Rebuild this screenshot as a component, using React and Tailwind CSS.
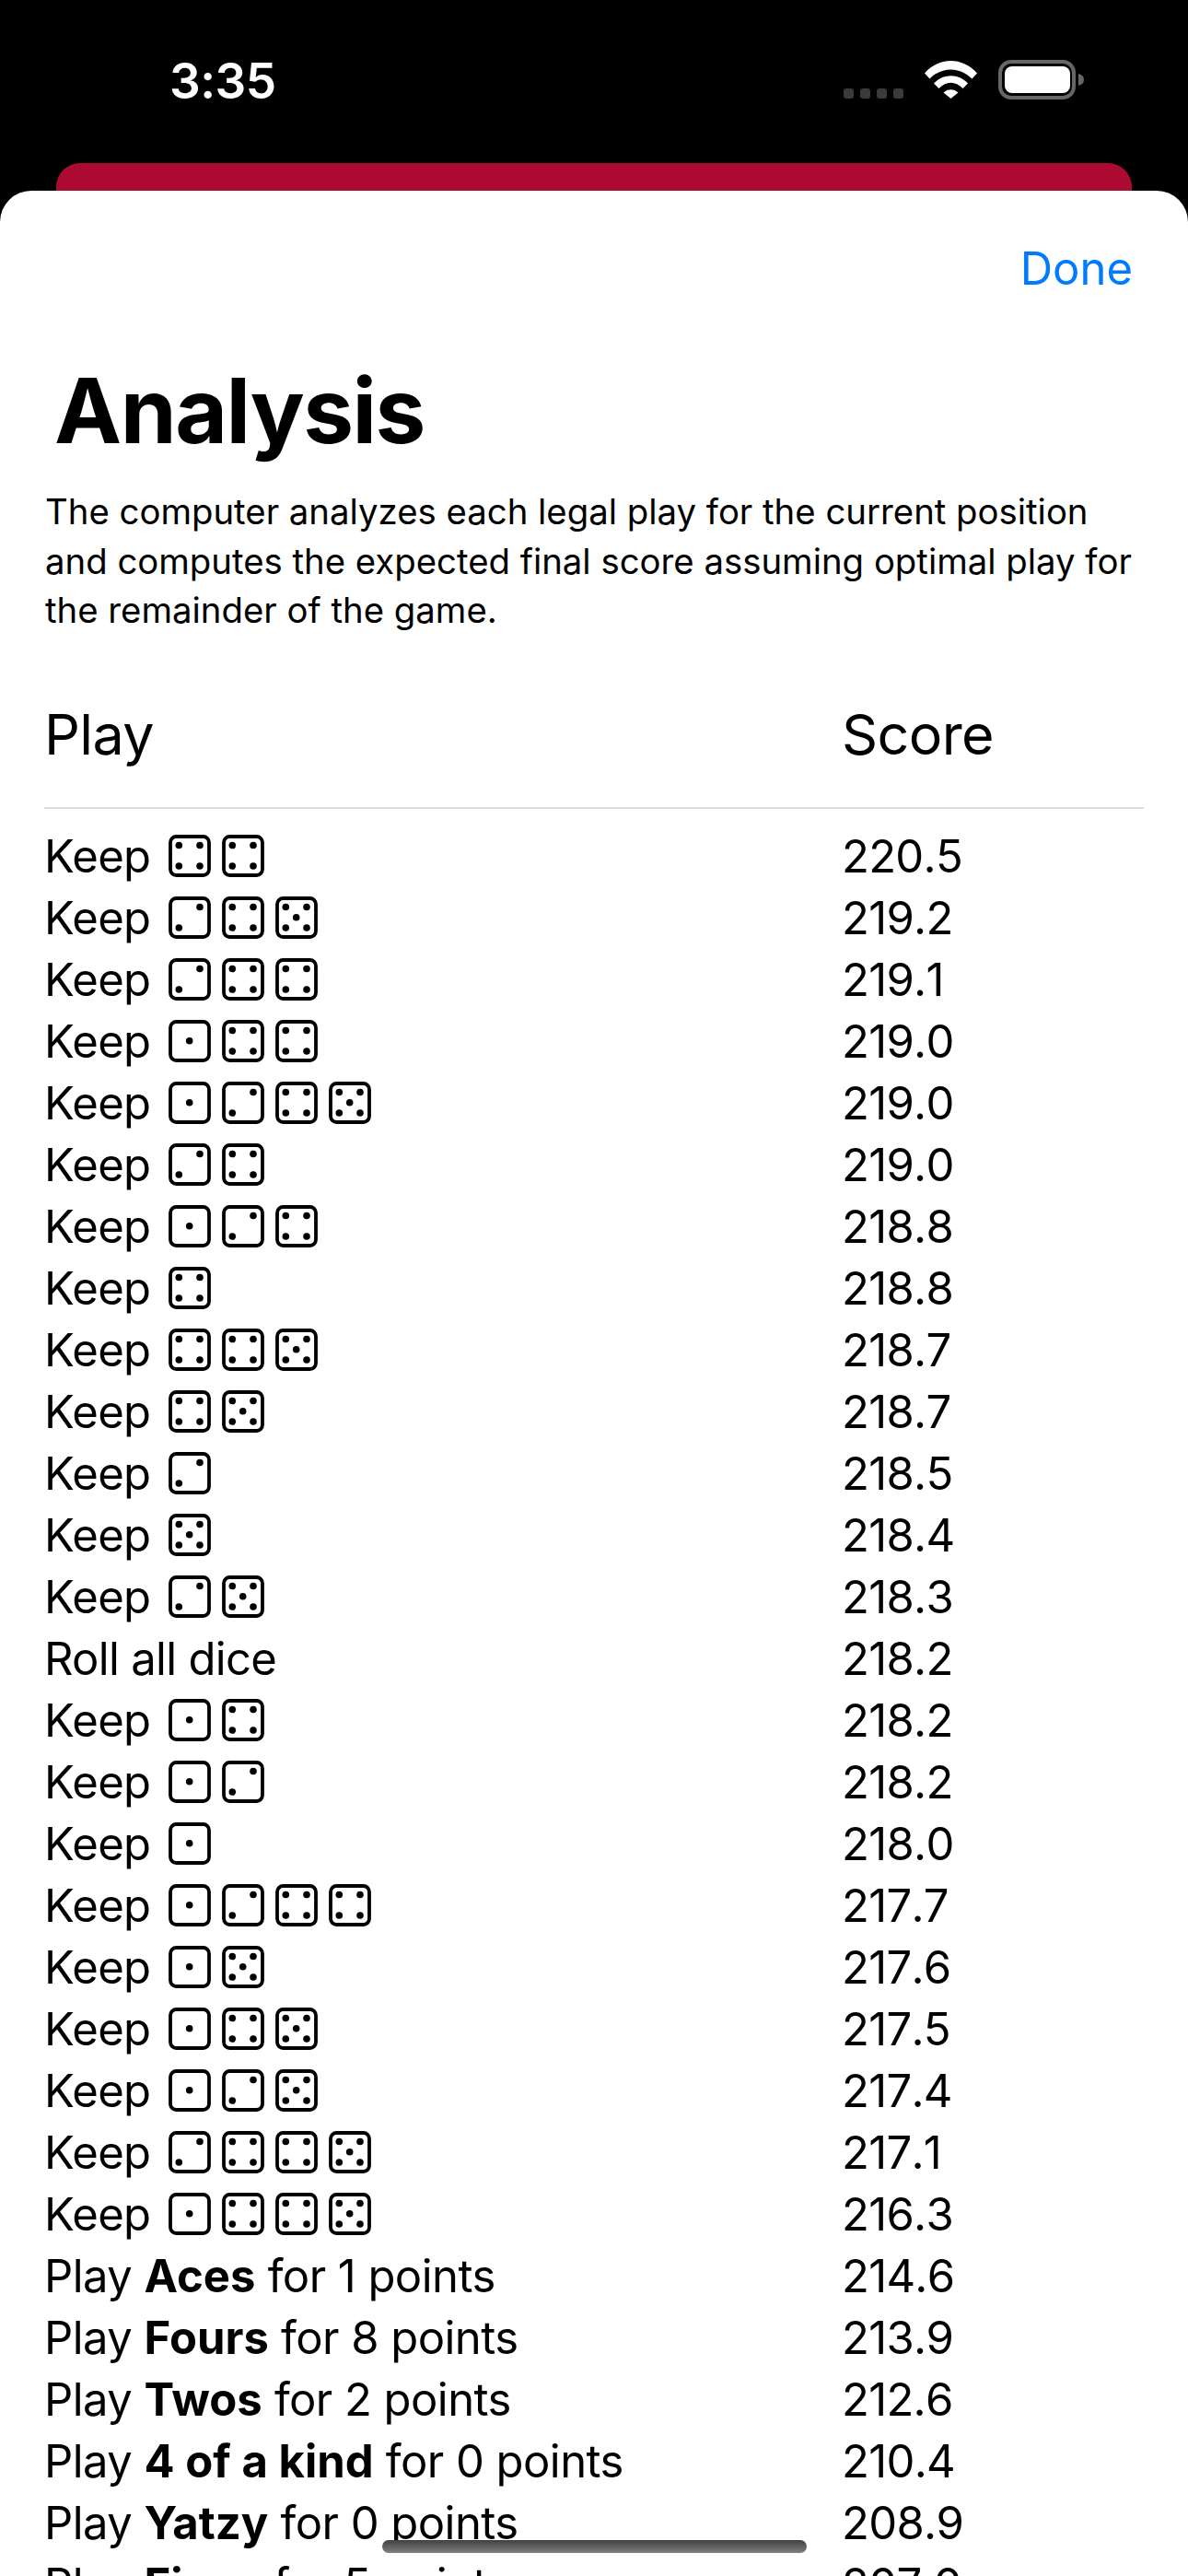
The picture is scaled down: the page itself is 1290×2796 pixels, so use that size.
import React from 'react';

const PIPS = {
  1: [[22.7, 22.7]],
  2: [[34, 11.5], [11.3, 34]],
  4: [[11.3, 11.5], [34, 11.5], [11.3, 34], [34, 34]],
  5: [[11.3, 11.5], [34, 11.5], [22.7, 22.7], [11.3, 34], [34, 34]],
};

const Die = ({ value }) => (
  <svg width="46" height="46" viewBox="0 0 46 46" className="shrink-0">
    <rect x="2" y="2" width="42" height="42" rx="6.5" fill="none" stroke="#000" strokeWidth="3.8" />
    {PIPS[value].map(([cx, cy], i) => (
      <circle key={i} cx={cx} cy={cy} r="3.8" fill="#000" />
    ))}
  </svg>
);

const rows = [
  { dice: [4, 4], score: '220.5' },
  { dice: [2, 4, 5], score: '219.2' },
  { dice: [2, 4, 4], score: '219.1' },
  { dice: [1, 4, 4], score: '219.0' },
  { dice: [1, 2, 4, 5], score: '219.0' },
  { dice: [2, 4], score: '219.0' },
  { dice: [1, 2, 4], score: '218.8' },
  { dice: [4], score: '218.8' },
  { dice: [4, 4, 5], score: '218.7' },
  { dice: [4, 5], score: '218.7' },
  { dice: [2], score: '218.5' },
  { dice: [5], score: '218.4' },
  { dice: [2, 5], score: '218.3' },
  { text: 'Roll all dice', score: '218.2' },
  { dice: [1, 4], score: '218.2' },
  { dice: [1, 2], score: '218.2' },
  { dice: [1], score: '218.0' },
  { dice: [1, 2, 4, 4], score: '217.7' },
  { dice: [1, 5], score: '217.6' },
  { dice: [1, 4, 5], score: '217.5' },
  { dice: [1, 2, 5], score: '217.4' },
  { dice: [2, 4, 4, 5], score: '217.1' },
  { dice: [1, 4, 4, 5], score: '216.3' },
  { play: 'Aces', points: 1, score: '214.6' },
  { play: 'Fours', points: 8, score: '213.9' },
  { play: 'Twos', points: 2, score: '212.6' },
  { play: '4 of a kind', points: 0, score: '210.4' },
  { play: 'Yatzy', points: 0, score: '208.9' },
  { play: 'Fives', points: 5, score: '207.0' },
];

const Row = ({ row }) => (
  <div className="flex h-[67px] items-center text-[49px] leading-[67px] tracking-[-0.7px] text-black">
    <div className="flex w-[866px] items-center">
      {row.dice && (
        <>
          <span className="w-[135px]">Keep</span>
          <span className="flex gap-[12px]">
            {row.dice.map((d, i) => (
              <Die key={i} value={d} />
            ))}
          </span>
        </>
      )}
      {row.text && <span>{row.text}</span>}
      {row.play && (
        <span className="tracking-[-0.55px]">
          Play <b className="font-bold tracking-[0px]">{row.play}</b> for {row.points} points
        </span>
      )}
    </div>
    <div className="[font-kerning:none]">{row.score}</div>
  </div>
);

const StatusBar = () => (
  <div className="relative flex h-[177px] items-start justify-between pl-[184px] pr-[113px] pt-[58px]">
    <span className="text-[53px] font-semibold leading-[60px] tracking-[-0.5px] text-white">3:35</span>
    <div className="flex items-start pt-[7px]">
      <div className="mr-[23px] mt-[31px] flex gap-[7px]">
        <span className="h-[11px] w-[11px] rounded-[3px] bg-[#3a3a3a]" />
        <span className="h-[11px] w-[11px] rounded-[3px] bg-[#3a3a3a]" />
        <span className="h-[11px] w-[11px] rounded-[3px] bg-[#3a3a3a]" />
        <span className="h-[11px] w-[11px] rounded-[3px] bg-[#3a3a3a]" />
      </div>
      <svg width="57" height="41" viewBox="0 0 57 41" className="mr-[23px] mt-[1px]">
        <path d="M0 13.5 C16 -4.5 41 -4.5 57 13.5 L51.5 19.5 C38 6 19 6 5.500 19.500 Z" fill="#fff" />
        <path d="M10 24.500 C20 13.500 37 13.500 47 24.500 L41.500 30 C33 21.500 24 21.500 15.500 30 Z" fill="#fff" />
        <path d="M20.500 34.500 C25 30 32 30 36.500 34.500 L28.500 41 Z" fill="#fff" />
      </svg>
      <svg width="93" height="43" viewBox="0 0 93 43">
        <rect x="2" y="2" width="80" height="39" rx="12" fill="none" stroke="#666" strokeWidth="4" />
        <rect x="7" y="7" width="71" height="29" rx="8" fill="#fff" />
        <path d="M87 15 C91 16 93 18 93 21.500 C93 25 91 27 87 28 Z" fill="#666" />
      </svg>
    </div>
  </div>
);

export default function App() {
  return (
    <div className="relative h-[2796px] w-[1290px] overflow-hidden bg-black font-['Inter',sans-serif]">
      <StatusBar />
      <div className="mx-[61px] h-[60px] rounded-t-[26px] bg-[#ac0a30]" />
      <div className="-mt-[30px] relative h-[2589px] overflow-hidden rounded-t-[34px] bg-white">
        <div className="flex justify-end pr-[60px] pt-[54px]">
          <span className="text-[49px] leading-[62px] text-[#007aff]">Done</span>
        </div>
        <h1 className="mt-[61px] pl-[59px] text-[98px] font-bold leading-[124px] tracking-[-1.5px] text-black">
          Analysis
        </h1>
        <p className="mt-[21px] w-[1241px] pl-[49px] text-[38.350px] leading-[53.500px] text-black">
          The computer analyzes each legal play for the current position and computes the expected final score assuming optimal play for the remainder of the game.
        </p>
        <div className="mt-[70px] px-[48px]">
          <div className="flex h-[74px] items-center text-[61px] leading-[74px] tracking-[-0.6px] text-black">
            <div className="w-[866px]">Play</div>
            <div>Score</div>
          </div>
          <div className="mt-[42px] h-[2px] bg-[#dcdcdc]" />
          <div className="mt-[18px]">
            {rows.map((row, i) => (
              <Row key={i} row={row} />
            ))}
          </div>
        </div>
      </div>
      <div className="absolute left-[415px] top-[2757px] h-[14px] w-[461px] rounded-full bg-gradient-to-b from-[#404040] to-[#808080]" />
    </div>
  );
}
